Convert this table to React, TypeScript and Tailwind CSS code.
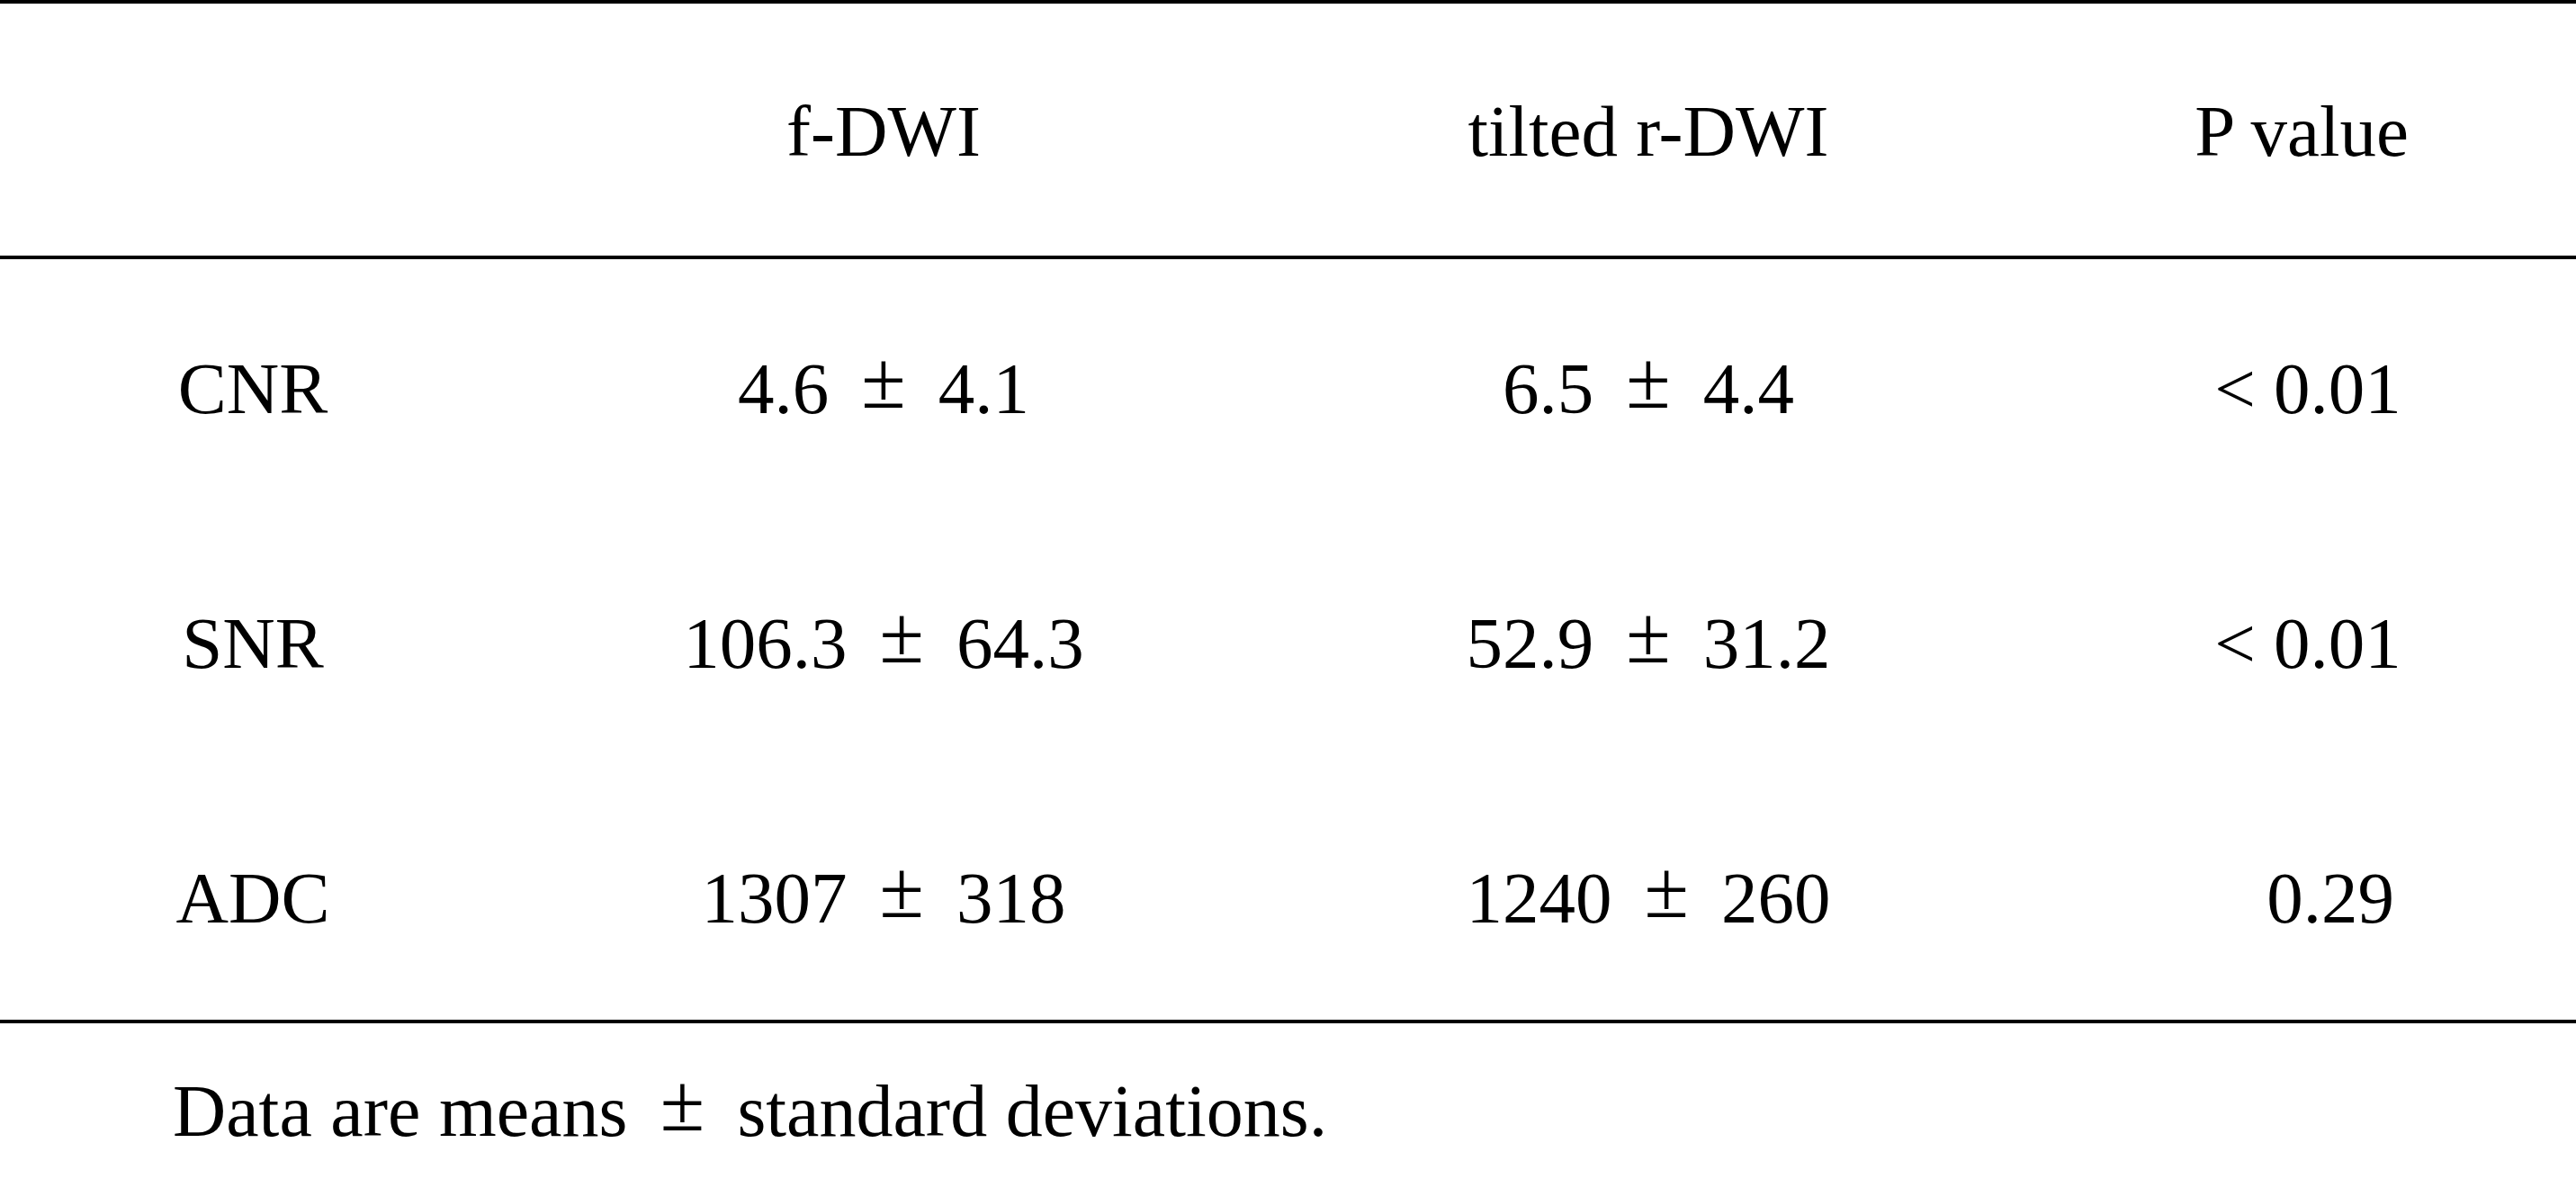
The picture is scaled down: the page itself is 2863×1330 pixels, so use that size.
import React from "react";

const Pm = () => (
  <span className="inline-block w-[81px] text-center text-[90px] leading-[70px] -translate-y-[6px]">±</span>
);

type Cell = { content: React.ReactNode; cls?: string };

const rows: Cell[][] = [
  [
    { content: "CNR" },
    { content: <>4.6 <Pm /> 4.1</> },
    { content: <>6.5 <Pm /> 4.4</> },
    { content: "< 0.01", cls: "pl-[5px]" },
  ],
  [
    { content: "SNR" },
    { content: <>106.3 <Pm /> 64.3</> },
    { content: <>52.9 <Pm /> 31.2</> },
    { content: "< 0.01", cls: "pl-[5px]" },
  ],
  [
    { content: "ADC" },
    { content: <>1307 <Pm /> 318</> },
    { content: <>1240 <Pm /> 260</> },
    { content: "0.29", cls: "pl-[55px]" },
  ],
];

export default function App() {
  return (
    <div
      className="w-full min-h-screen bg-white text-black text-[81px] leading-[80px]"
      style={{ fontFamily: '"Liberation Serif", "Times New Roman", serif' }}
    >
      <div className="h-[4px] bg-black" />
      <div className="grid grid-cols-[562px_840px_860px_1fr] pt-[102px] pb-[98px] text-center">
        <div />
        <div>f-DWI</div>
        <div>tilted r-DWI</div>
        <div className="pr-[9px]">P value</div>
      </div>
      <div className="h-[4px] bg-black" />
      <div className="flex flex-col gap-[203px] pt-[104px] pb-[95px]">
        {rows.map((r, i) => (
          <div key={i} className="grid grid-cols-[562px_840px_860px_1fr] text-center">
            {r.map((c, j) => (
              <div key={j} className={"h-[80px] whitespace-pre " + (c.cls ?? "")}>
                {c.content}
              </div>
            ))}
          </div>
        ))}
      </div>
      <div className="h-[4px] bg-black" />
      <div className="pt-[58px] pl-[192px] text-[82px]">
        Data are means <Pm /> standard deviations.
      </div>
    </div>
  );
}
